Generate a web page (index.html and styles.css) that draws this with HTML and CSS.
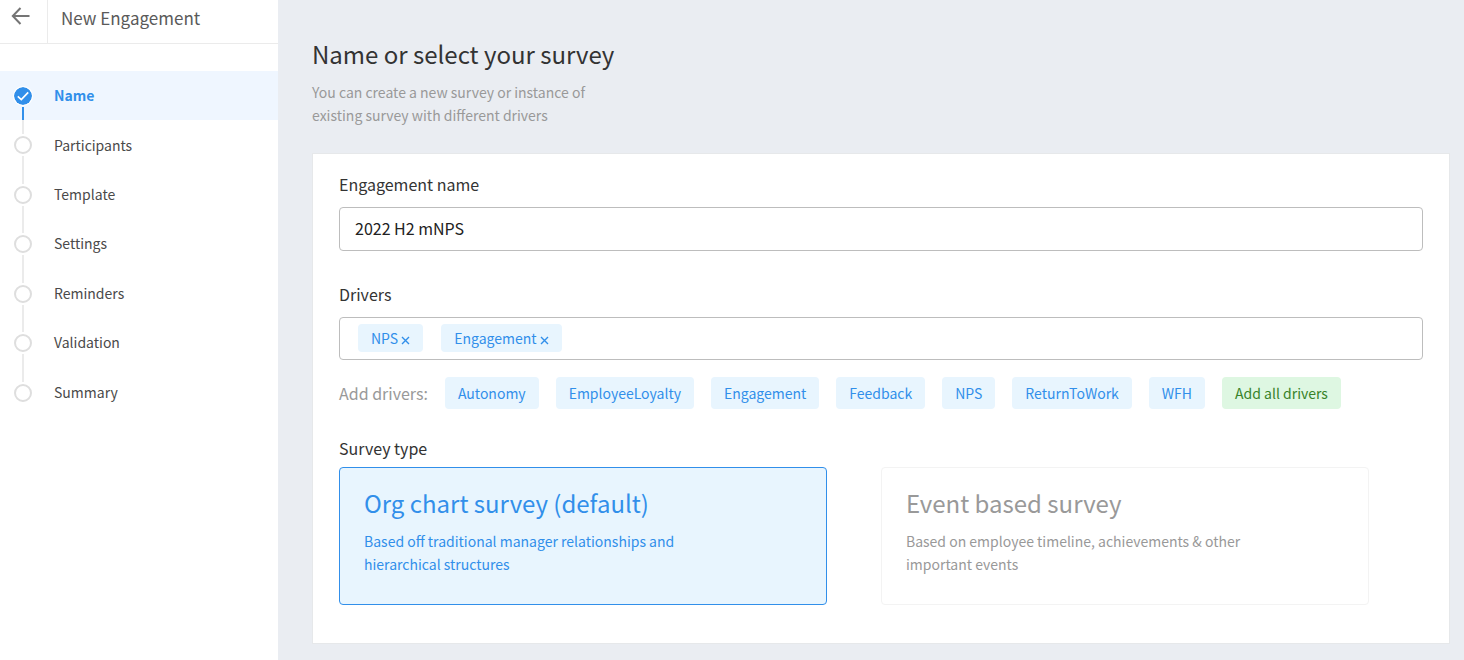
FILE: index.html
```html
<!DOCTYPE html>
<html lang="en">

<head>
    <meta charset="UTF-8">
    <meta name="viewport" content="width=device-width, initial-scale=1.0">
    <title>New Engagement</title>
    <link rel="stylesheet" href="styles.css">
</head>

<body>
    <aside class="sidebar">
        <div class="sidebarHeader">
            <a href="#" class="backLink" aria-label="Back">
                <svg width="20" height="18" viewBox="0 0 20 18" fill="none" stroke="#757575" stroke-width="2">
                    <path d="M18.5 9H2M9.5 1L1.8 9L9.5 17" />
                </svg>
            </a>
            <span class="sidebarTitle">New Engagement</span>
        </div>

        <nav>
            <ol class="steps">
                <li class="step stepActive">
                    <span class="marker">
                        <svg width="18" height="18" viewBox="0 0 18 18" fill="none">
                            <circle cx="9" cy="9" r="9" fill="#318fea" />
                            <path d="M3.8 9.4L7.3 12.6L14.2 5.4" stroke="#fff" stroke-width="1.7" />
                        </svg>
                    </span>
                    <a href="#">Name</a>
                </li>
                <li class="step"><span class="marker"><span class="circle"></span></span><a href="#">Participants</a></li>
                <li class="step"><span class="marker"><span class="circle"></span></span><a href="#">Template</a></li>
                <li class="step"><span class="marker"><span class="circle"></span></span><a href="#">Settings</a></li>
                <li class="step"><span class="marker"><span class="circle"></span></span><a href="#">Reminders</a></li>
                <li class="step"><span class="marker"><span class="circle"></span></span><a href="#">Validation</a></li>
                <li class="step"><span class="marker"><span class="circle"></span></span><a href="#">Summary</a></li>
            </ol>
        </nav>
    </aside>

    <main class="content">
        <h1>Name or select your survey</h1>
        <p class="intro">You can create a new survey or instance of existing survey with different drivers</p>

        <form class="panel">
            <div class="field">
                <label class="fieldLabel" for="engagementName">Engagement name</label>
                <input class="textBox" type="text" id="engagementName" value="2022 H2 mNPS">
            </div>

            <div class="field">
                <label class="fieldLabel" for="driverInput">Drivers</label>
                <div class="driverBox">
                    <button type="button" class="tag">NPS
                        <svg class="cross" viewBox="0 0 9 9"><path d="M1 1L8 8M8 1L1 8" /></svg>
                    </button>
                    <button type="button" class="tag">Engagement
                        <svg class="cross" viewBox="0 0 9 9"><path d="M1 1L8 8M8 1L1 8" /></svg>
                    </button>
                    <input class="driverInput" type="text" id="driverInput">
                </div>
            </div>

            <div class="addDrivers">
                <span class="addLabel">Add drivers:</span>
                <button type="button" class="tag tagLarge">Autonomy</button>
                <button type="button" class="tag tagLarge">EmployeeLoyalty</button>
                <button type="button" class="tag tagLarge">Engagement</button>
                <button type="button" class="tag tagLarge">Feedback</button>
                <button type="button" class="tag tagLarge">NPS</button>
                <button type="button" class="tag tagLarge">ReturnToWork</button>
                <button type="button" class="tag tagLarge">WFH</button>
                <button type="button" class="tag tagLarge tagAll">Add all drivers</button>
            </div>

            <fieldset class="surveyTypes">
                <legend>Survey type</legend>
                <div class="typeRow">
                    <label class="typeCard">
                        <input type="radio" name="surveyType" value="org" checked>
                        <span class="typeTitle">Org chart survey (default)</span>
                        <span class="typeText">Based off traditional manager relationships and hierarchical structures</span>
                    </label>
                    <label class="typeCard">
                        <input type="radio" name="surveyType" value="event">
                        <span class="typeTitle">Event based survey</span>
                        <span class="typeText">Based on employee timeline, achievements &amp; other important events</span>
                    </label>
                </div>
            </fieldset>
        </form>
    </main>
</body>

</html>
```

FILE: styles.css
```css
* {
    box-sizing: border-box;
}

body {
    display: flex;
    min-height: 100vh;
    margin: 0;
    background-color: #eaedf2;
    color: #333;
    font-family: "Noto Sans CJK SC", "Liberation Sans", sans-serif;
    font-size: 14px;
    line-height: 23px;
}

a {
    color: inherit;
    text-decoration: none;
}

button,
input {
    font: inherit;
    color: inherit;
}

/* sidebar */
.sidebar {
    flex: 0 0 278px;
    background-color: #fff;
}

.sidebarHeader {
    display: flex;
    height: 44px;
    border-bottom: 1px solid #ebebeb;
}

.backLink {
    width: 48px;
    padding: 7px 0 0 11px;
    border-right: 1px solid #ebebeb;
}

.backLink svg {
    display: block;
}

.sidebarTitle {
    padding: 6px 0 0 13px;
    font-size: 17px;
    color: #5a5a5a;
}

.steps {
    display: grid;
    grid-auto-rows: 1fr;
    height: 346px;
    margin: 27px 0 0;
    padding: 0;
    list-style: none;
}

.step {
    display: flex;
    align-items: center;
    gap: 22px;
    padding-left: 14px;
    color: #4a4a4a;
}

/* marker column: line, circle, line */
.marker {
    display: flex;
    flex-direction: column;
    align-items: center;
    gap: 2px;
    width: 18px;
    height: 100%;
}

.marker::before,
.marker::after {
    content: "";
    width: 2px;
    background-color: #ebebeb;
}

.marker::before {
    height: 14px;
}

.marker::after {
    flex: 1;
}

.circle {
    width: 18px;
    height: 18px;
    border: 2px solid #dedede;
    border-radius: 50%;
}

.step:last-child .marker::after {
    background-color: transparent;
}

.stepActive {
    background-color: #eff6ff;
    color: #318fea;
    font-weight: bold;
}

.stepActive .marker::before {
    background-color: transparent;
}

.stepActive .marker::after {
    background-color: #318fea;
}

.stepActive svg {
    flex: none;
    border-radius: 50%;
    box-shadow: 0 0 0 1px #fff;
}

/* content */
.content {
    flex: 1;
    padding: 36px 14px 16px 34px;
}

h1 {
    margin: 0;
    font-size: 24px;
    font-weight: normal;
    line-height: 36px;
}

.intro {
    max-width: 300px;
    margin: 9px 0 26px;
    color: #999;
}

.panel {
    padding: 18px 26px 38px;
    border: 1px solid #e6e8ea;
    background-color: #fff;
}

.field {
    margin-bottom: 31px;
}

.fieldLabel,
legend {
    display: block;
    padding: 0;
    font-size: 16px;
    line-height: 24px;
}

.fieldLabel {
    margin-bottom: 11px;
}

.textBox,
.driverBox {
    width: 100%;
    border: 1px solid #bdbdbd;
    border-radius: 4px;
    background-color: #fff;
}

.textBox {
    display: block;
    height: 44px;
    padding: 0 15px 2px;
    font-size: 16px;
    color: #222;
}

.driverBox {
    display: flex;
    gap: 18px;
    padding: 6px 18px 7px;
}

.driverInput {
    flex: 1;
    min-width: 0;
    padding: 0;
    border: 0;
    outline: 0;
    background: none;
}

.tag {
    height: 28px;
    padding: 0 13px;
    border: 0;
    border-radius: 4px;
    background-color: #e8f5fe;
    color: #318fea;
    line-height: 28px;
    cursor: pointer;
}

.tagLarge {
    height: 32px;
    line-height: 32px;
}

.tagAll {
    background-color: #def7e2;
    color: #38832a;
}

.cross {
    width: 9px;
    height: 9px;
    vertical-align: -1px;
    stroke: #318fea;
    stroke-width: 1.4;
}

.addDrivers {
    display: flex;
    flex-wrap: wrap;
    align-items: center;
    gap: 17px;
    margin: -14px 0 27px;
}

.addLabel {
    font-size: 16px;
    color: #999;
}

.surveyTypes {
    margin: 0;
    padding: 0;
    border: 0;
}

.typeRow {
    display: flex;
    gap: 5%;
    margin-top: 7px;
}

.typeCard {
    width: 45%;
    padding: 17px 24px 28px;
    border: 1px solid #f3f3f3;
    border-radius: 4px;
    color: #999;
    cursor: pointer;
}

.typeCard input {
    position: absolute;
    opacity: 0;
}

.typeCard:has(input:checked) {
    border-color: #318fea;
    background-color: #e8f5fe;
    color: #318fea;
}

.typeTitle,
.typeText {
    display: block;
}

.typeTitle {
    margin-bottom: 9px;
    font-size: 24px;
    line-height: 36px;
}

.typeText {
    max-width: 350px;
}
```
